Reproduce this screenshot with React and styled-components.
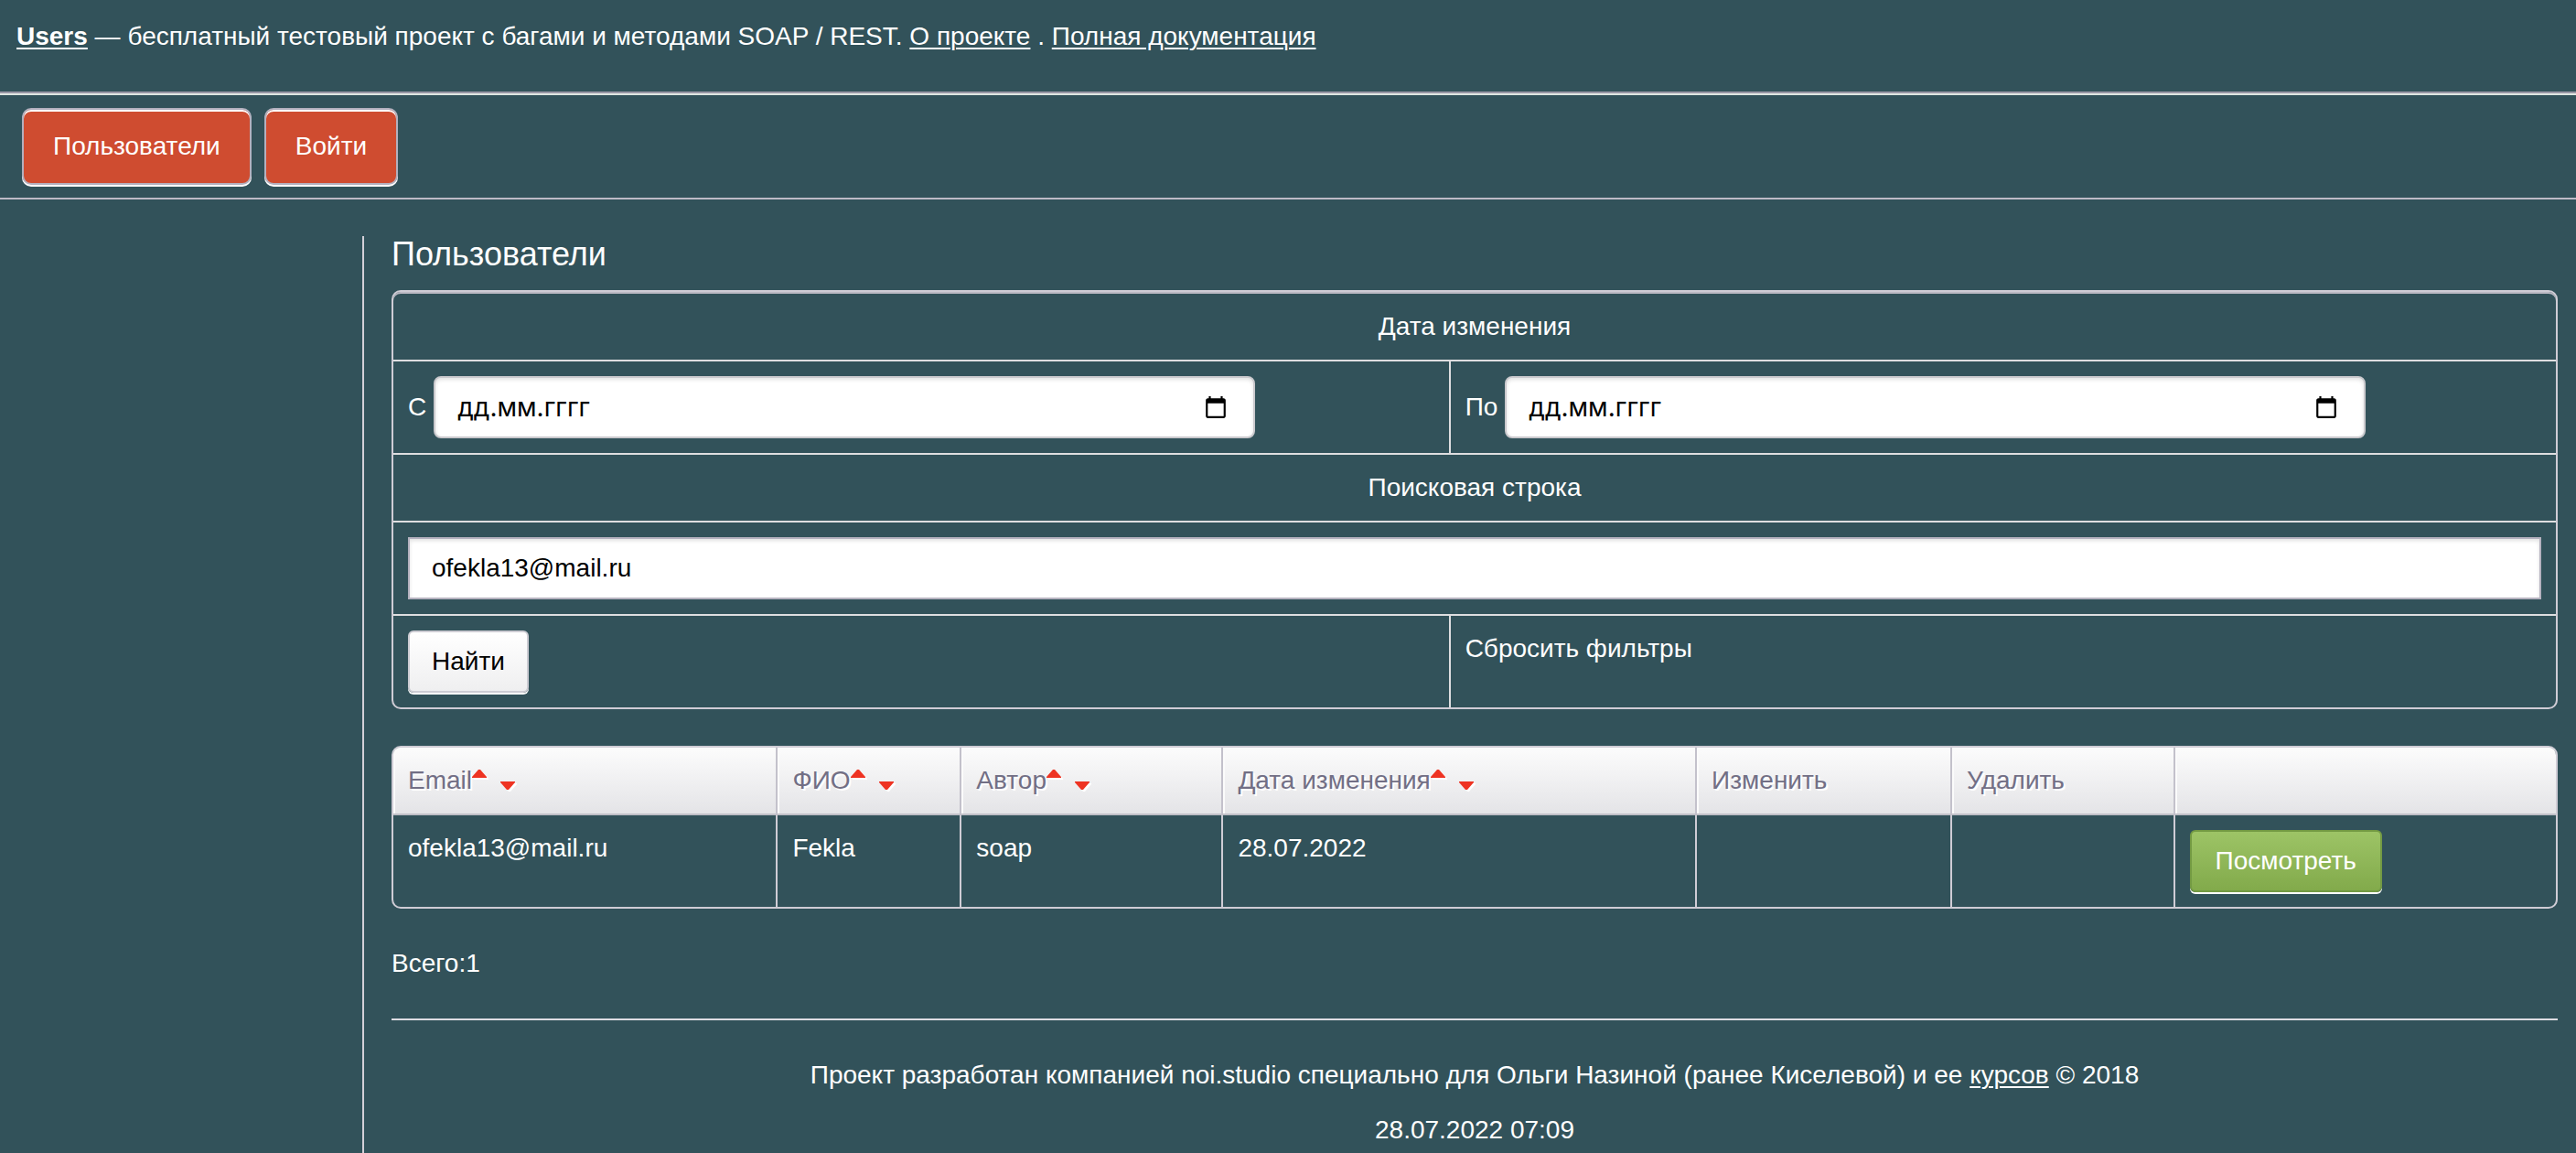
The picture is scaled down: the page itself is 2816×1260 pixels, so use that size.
import React from "react";
import styled, { createGlobalStyle, css } from "styled-components";

const color = {
  page: "#32525a",
  text: "#ffffff",
  line: "#cfccd5",
  rule: "#dedee0",
  muted: "#726f85",
  field: "#cac9cd",
  accent: "#cf4c30",
  sort: "#ee3322",
};

const GlobalStyle = createGlobalStyle`
  *, *::before, *::after { box-sizing: border-box; }
  html { height: 100%; }
  body {
    margin: 0;
    min-height: 100%;
    background: ${color.page};
    color: ${color.text};
    font-family: "Liberation Sans", Arial, Helvetica, sans-serif;
    font-size: 28px;
    line-height: 40px;
  }
  p, h1 { margin: 0; font-weight: normal; }
`;

const Page = styled.div`
  display: flex;
  flex-direction: column;
  min-height: 100vh;
`;

const TopBar = styled.header`
  padding: 20px 18px 40px;
  border-bottom: 2px solid #9a98a6;
  box-shadow: 0 2px 0 #dfe5e1;
`;

const TextLink = styled.a`
  color: inherit;
  font-weight: ${(p) => (p.$strong ? "bold" : "inherit")};
  text-decoration: ${(p) => (p.$plain ? "none" : "underline")};
  text-decoration-thickness: 2px;
  text-underline-offset: 3px;
`;

const Nav = styled.nav`
  display: flex;
  gap: 14px;
  padding: 16px 24px 14px;
  border-bottom: 2px solid #bdbac6;
`;

const NavLink = styled.a`
  padding: 20px 32px;
  border: 2px solid #b3b0be;
  border-radius: 10px;
  background: ${color.accent};
  box-shadow: inset 0 2px 0 #ffffff, 0 2px 0 #ffffff;
  color: inherit;
  text-decoration: none;
`;

const Body = styled.div`
  flex: 1;
  display: flex;
  padding-top: 40px;
`;

const Sidebar = styled.aside`
  flex: 0 0 398px;
  border-right: 2px solid #d3d0d8;
`;

const Content = styled.main`
  flex: 1;
  min-width: 0;
  display: flex;
  flex-direction: column;
  gap: 40px;
  padding: 0 20px 0 30px;
`;

const Title = styled.h1`
  margin-bottom: 19px;
  font-size: 36px;
  line-height: 40px;
`;

const Filters = styled.form`
  display: grid;
  grid-template-columns: 488fr 512fr;
  border: 2px solid ${color.line};
  border-radius: 10px;
  box-shadow: inset 0 2px 0 #bcbac4;
  padding-top: 2px;
`;

const FilterCell = styled.div`
  display: flex;
  align-items: ${(p) => (p.$top ? "flex-start" : "center")};
  justify-content: ${(p) => (p.$center ? "center" : "flex-start")};
  gap: 8px;
  padding: 16px;
  grid-column: ${(p) => (p.$wide ? "1 / -1" : "auto")};
  border-top: ${(p) => (p.$first ? "0" : `2px solid ${color.rule}`)};
  border-left: ${(p) => (p.$divided ? `2px solid ${color.rule}` : "0")};
`;

const fieldBox = css`
  height: 68px;
  border: 2px solid ${color.field};
  background: #ffffff;
  box-shadow: inset 0 2px 4px rgba(0, 0, 0, 0.12);
`;

const DateBox = styled.div`
  ${fieldBox}
  flex: 0 0 80%;
  display: flex;
  align-items: center;
  padding: 0 28px 0 24px;
  border-radius: 8px;
`;

const DateInput = styled.input`
  flex: 1;
  min-width: 0;
  padding: 0;
  border: 0;
  outline: 0;
  background: transparent;
  color: #000000;
  font: 28px/40px Inter, "Liberation Sans", sans-serif;

  &::placeholder { color: #000000; opacity: 1; }
`;

const PickerButton = styled.button`
  display: flex;
  padding: 0;
  border: 0;
  background: none;
  color: #000000;
`;

const SearchInput = styled.input`
  ${fieldBox}
  width: 100%;
  padding: 0 24px;
  border-color: #b5b2bf;
  outline: 0;
  color: #000000;
  font: inherit;
`;

const Button = styled.button`
  height: 68px;
  padding: 0 24px;
  border: 2px solid #cdccd3;
  border-radius: 6px;
  background: linear-gradient(#ffffff, #efeff0);
  box-shadow: 0 2px 0 #ffffff;
  color: #000000;
  font: inherit;
`;

const ViewLink = styled.a`
  display: block;
  width: max-content;
  padding: 12px 26px;
  border: 2px solid #739a43;
  border-radius: 6px;
  background: linear-gradient(#9dc466, #82aa4b);
  box-shadow: 0 2px 0 #ffffff;
  color: #ffffff;
  text-decoration: none;
`;

const Table = styled.table`
  width: 100%;
  table-layout: fixed;
  border-collapse: separate;
  border-spacing: 0;
  border: 2px solid ${color.line};
  border-radius: 10px;
`;

const HeadCell = styled.th`
  height: 74px;
  padding: 16px;
  border-bottom: 2px solid #c0bfc7;
  border-left: 2px solid #c3c1cb;
  background: linear-gradient(#fcfcfc, #e4e4e7);
  box-shadow: inset 2px 2px 0 #fbfbfb;
  color: ${color.muted};
  font-weight: normal;
  text-align: left;
  text-shadow: 2px 2px 0 #ffffff;
  white-space: nowrap;

  &:first-child { border-left: 0; border-top-left-radius: 8px; }
  &:last-child { border-top-right-radius: 8px; }
`;

const Cell = styled.td`
  padding: 16px;
  border-left: 2px solid ${color.line};
  vertical-align: top;

  &:first-child { border-left: 0; }
`;

const HeadLabel = styled.div`
  display: flex;
  align-items: center;
`;

const SortLinks = styled.span`
  display: flex;
  gap: 13px;
`;

const SortLink = styled.a`
  display: flex;
  color: ${color.sort};
`;

const Footer = styled.footer`
  display: flex;
  flex-direction: column;
  gap: 20px;
  padding-top: 40px;
  border-top: 2px solid #dddce2;
  text-align: center;
`;

const CalendarIcon = () => (
  <svg width="26" height="26" viewBox="0 0 24 24" fill="currentColor" aria-hidden="true">
    <path d="M20 3h-1V1h-2v2H7V1H5v2H4c-1.1 0-2 .9-2 2v16c0 1.1.9 2 2 2h16c1.1 0 2-.9 2-2V5c0-1.1-.9-2-2-2zm0 18H4V8h16v13z" />
  </svg>
);

const SortArrow = ({ up }) => {
  const points = up ? "0,10 0,9 7,1 9,1 16,9 16,10" : "0,14 16,14 16,15 9,23 7,23 0,15";
  return (
    <svg width="18" height="26" viewBox="0 0 18 26" aria-hidden="true">
      <polygon points={points} fill="#ffffff" transform="translate(2 2)" />
      <polygon points={points} fill="currentColor" />
    </svg>
  );
};

const DateField = ({ id, label }) => (
  <>
    <label htmlFor={id}>{label}</label>
    <DateBox>
      <DateInput id={id} type="text" placeholder="дд.мм.гггг" />
      <PickerButton type="button" aria-label="Открыть календарь">
        <CalendarIcon />
      </PickerButton>
    </DateBox>
  </>
);

const columns = [
  { title: "Email", key: "email", width: "17.7%", sortable: true },
  { title: "ФИО", key: "name", width: "8.5%", sortable: true },
  { title: "Автор", key: "author", width: "12.1%", sortable: true },
  { title: "Дата изменения", key: "changed", width: "21.9%", sortable: true },
  { title: "Изменить", key: "edit", width: "11.8%" },
  { title: "Удалить", key: "remove", width: "10.3%" },
  { title: "", key: "view", width: "17.7%" },
];

const users = [
  {
    email: "ofekla13@mail.ru",
    name: "Fekla",
    author: "soap",
    changed: "28.07.2022",
    view: <ViewLink href="#view">Посмотреть</ViewLink>,
  },
];

export default function App() {
  return (
    <Page>
      <GlobalStyle />
      <TopBar>
        <TextLink href="#home" $strong>Users</TextLink> — бесплатный тестовый проект с багами и методами SOAP / REST.{" "}
        <TextLink href="#about">О проекте</TextLink> . <TextLink href="#docs">Полная документация</TextLink>
      </TopBar>
      <Nav>
        <NavLink href="#users">Пользователи</NavLink>
        <NavLink href="#login">Войти</NavLink>
      </Nav>
      <Body>
        <Sidebar />
        <Content>
          <section>
            <Title>Пользователи</Title>
            <Filters onSubmit={(e) => e.preventDefault()}>
              <FilterCell $wide $center $first>Дата изменения</FilterCell>
              <FilterCell>
                <DateField id="date-from" label="С" />
              </FilterCell>
              <FilterCell $divided>
                <DateField id="date-to" label="По" />
              </FilterCell>
              <FilterCell $wide $center>
                <label htmlFor="query">Поисковая строка</label>
              </FilterCell>
              <FilterCell $wide>
                <SearchInput id="query" type="text" defaultValue="ofekla13@mail.ru" />
              </FilterCell>
              <FilterCell>
                <Button type="submit">Найти</Button>
              </FilterCell>
              <FilterCell $divided $top>
                <TextLink href="#reset" $plain>Сбросить фильтры</TextLink>
              </FilterCell>
            </Filters>
          </section>
          <Table>
            <colgroup>
              {columns.map((c) => (
                <col key={c.key} style={{ width: c.width }} />
              ))}
            </colgroup>
            <thead>
              <tr>
                {columns.map((c) => (
                  <HeadCell key={c.key} scope="col">
                    <HeadLabel>
                      {c.title}
                      {c.sortable && (
                        <SortLinks>
                          <SortLink href={`#${c.key}-asc`} aria-label="По возрастанию"><SortArrow up /></SortLink>
                          <SortLink href={`#${c.key}-desc`} aria-label="По убыванию"><SortArrow /></SortLink>
                        </SortLinks>
                      )}
                    </HeadLabel>
                  </HeadCell>
                ))}
              </tr>
            </thead>
            <tbody>
              {users.map((u) => (
                <tr key={u.email}>
                  {columns.map((c) => (
                    <Cell key={c.key}>{u[c.key]}</Cell>
                  ))}
                </tr>
              ))}
            </tbody>
          </Table>
          <p>Всего:{users.length}</p>
          <Footer>
            <p>
              Проект разработан компанией <TextLink href="#studio" $plain>noi.studio</TextLink> специально для Ольги Назиной (ранее Киселевой) и ее{" "}
              <TextLink href="#courses">курсов</TextLink> © 2018
            </p>
            <p>28.07.2022 07:09</p>
          </Footer>
        </Content>
      </Body>
    </Page>
  );
}
